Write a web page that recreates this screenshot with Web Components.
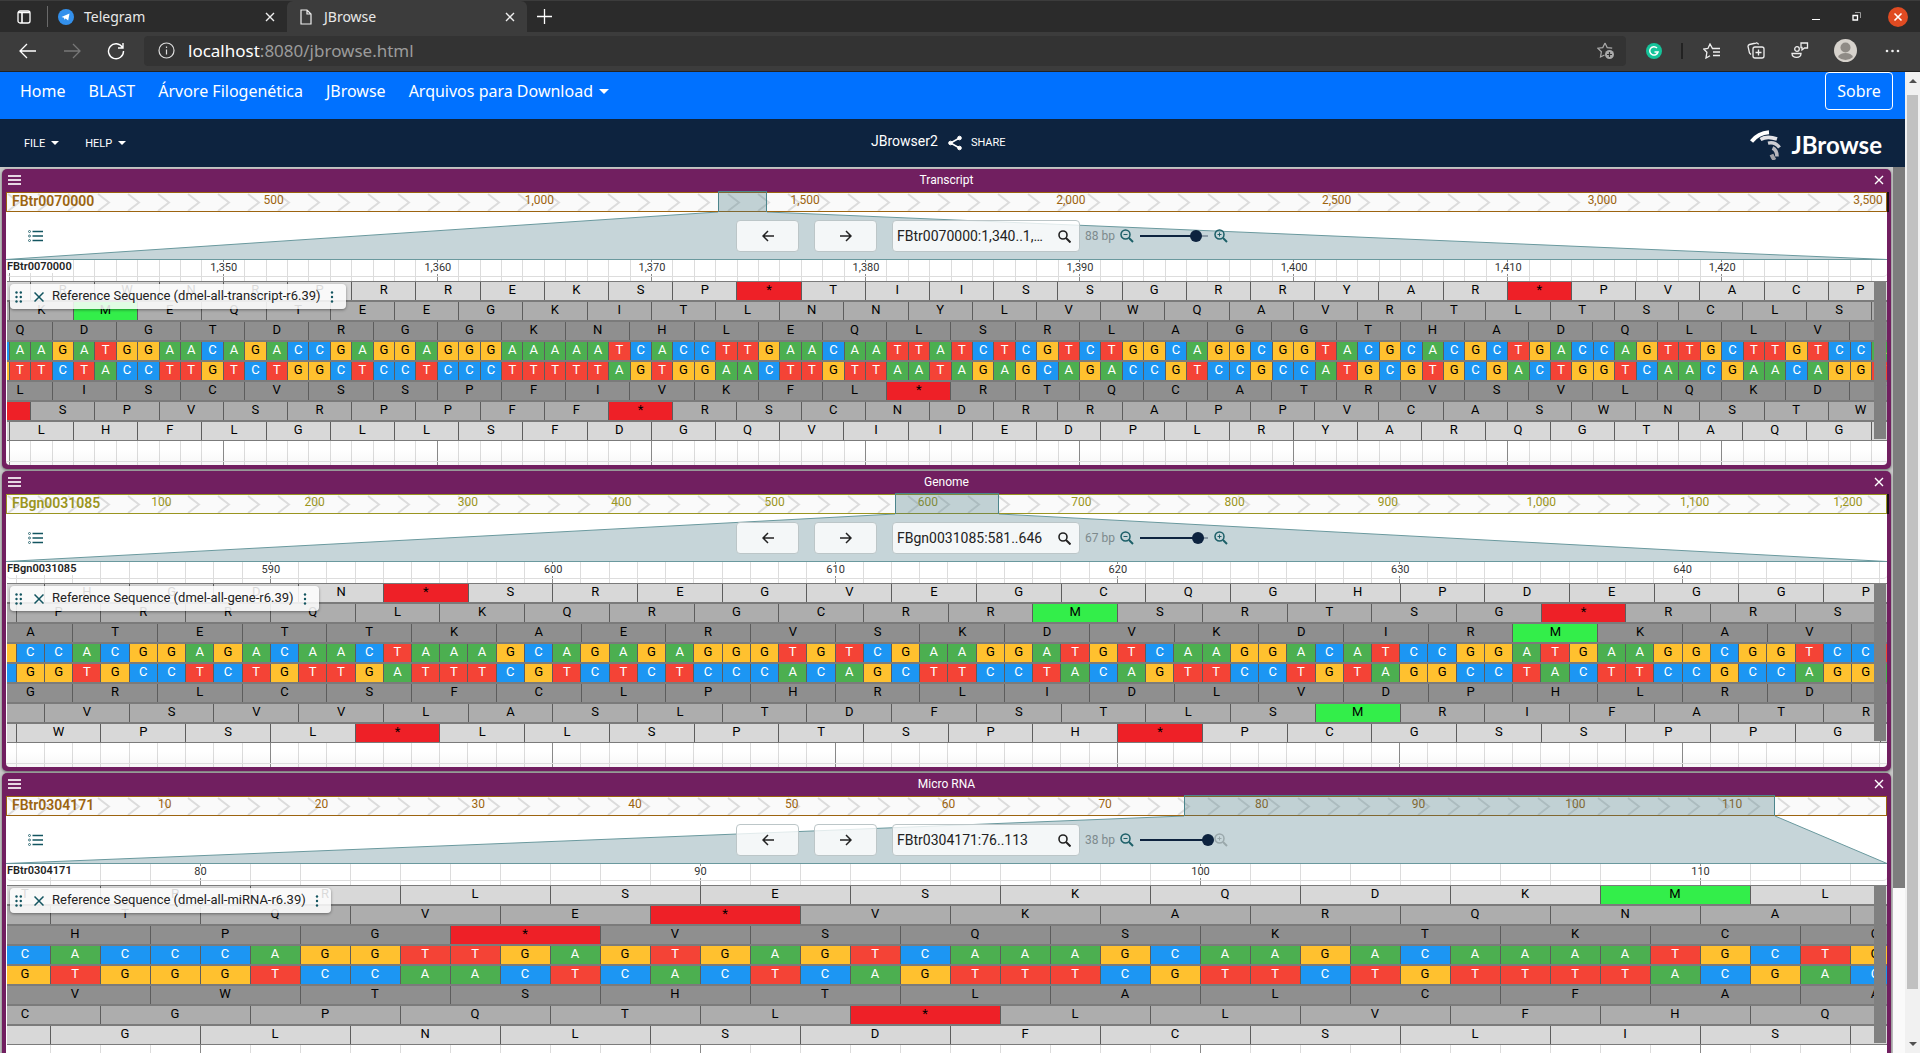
<!DOCTYPE html>
<html lang="pt">
<head>
<meta charset="utf-8">
<title>JBrowse</title>
<style>
  html, body { margin: 0; height: 100%; }
  body { overflow: hidden; font-family: Roboto, "Open Sans", sans-serif; }
</style>
</head>
<body>
<browser-window>
  <site-nav slot="page"></site-nav>
  <genome-app slot="page">
    <genome-view name="Transcript" ref="FBtr0070000" set="dmel-all-transcript-r6.39" loc="FBtr0070000:1,340..1,…" span="88 bp" zoom="83"
      tone="#9c6410" seq="GTCAAGATGGAACAGACCGAGGAGGGAAAAATCACCTTGAACAATTATCTCGTCTGGCAGGCGGTACGCACGCTGACCAGTTGCTTGTCCACA"
      seq-start="1337" from="1339.920" bases="87.85" phases="1,0,2"
      ov-step="500" ov-count="7" ov-origin="1" ov-pitch="266" ov-a="712" ov-b="761" tail></genome-view>
    <genome-view name="Genome" ref="FBgn0031085" set="dmel-all-gene-r6.39" loc="FBgn0031085:581..646" span="67 bp" zoom="85"
      tone="#9a9520" seq="GAGCCACGGAGACAACTAAAGCAGAGAGGGTGTCGAAGGATGTCAAGGACATCCGGATGAAGGCGGTCCTGC"
      seq-start="578" from="580.690" bases="66.57" phases="1,0,2"
      ov-step="100" ov-count="12" ov-origin="1" ov-pitch="153.5" ov-a="889" ov-b="993" tail></genome-view>
    <genome-view name="Micro RNA" ref="FBtr0304171" set="dmel-all-miRNA-r6.39" loc="FBtr0304171:76..113" span="38 bp" zoom="100"
      tone="#9c6410" seq="GACACCCAGGTTGAGTGAGTCAAAGCAAGACAAAATGCTGCAA"
      seq-start="74" from="76.15" bases="37.6" phases="1,0,2"
      ov-step="10" ov-count="11" ov-origin="1" ov-pitch="156.9" ov-a="1178" ov-b="1769"></genome-view>
  </genome-app>
</browser-window>

<script>
const BASE = `*{box-sizing:border-box} button,input{font:inherit;color:inherit;margin:0;padding:0;border:0;background:none}
  a{color:inherit;text-decoration:none} svg{display:block;flex:none}`;

class Base extends HTMLElement {
  connectedCallback() {
    if (this.shadowRoot) return;
    this.attachShadow({ mode: 'open' }).innerHTML = `<style>${BASE}${this.css()}</style>${this.html()}`;
  }
  num(n) { return parseFloat(this.getAttribute(n)); }
  str(n) { return this.getAttribute(n) || ''; }
}

/* ---------- browser chrome ---------- */
customElements.define('browser-tab', class extends Base {
  css() { return `
    :host{display:flex;align-items:center;width:240px;height:32px;padding:0 12px 0 11px;gap:10px;color:#e8e8e8;font-size:14px}
    :host([active]){background:#3c3c3c;border-radius:6px 6px 0 0}
    span{flex:1;white-space:nowrap} button{width:10px;height:10px}`; }
  html() { return `<slot name="icon"></slot><span><slot></slot></span>
    <button aria-label="Close tab"><svg width="10" height="10" stroke="#eee" stroke-width="1.4"><path d="M1 1l8 8M9 1L1 9"/></svg></button>`; }
});

customElements.define('browser-window', class extends Base {
  css() { return `
    :host{display:flex;flex-direction:column;height:100vh;background:#3c3c3c;font-family:"Noto Sans",sans-serif}
    .tabs{display:flex;align-items:center;height:32px;background:#2b2b2b;border-top:1px solid #3c3c3c;flex:none}
    .side{width:47px;display:flex;justify-content:center}
    .rule{width:1px;height:21px;background:#6a6a6a;margin-right:-1px}
    .new{width:34px;display:flex;justify-content:center}
    .grow{flex:1}
    .win{width:40px;height:31px;display:flex;align-items:center;justify-content:center}
    .win.last{width:44px}
    .bar{display:flex;align-items:center;height:40px;padding:0 4px 2px 6px;border-bottom:1px solid #222;flex:none}
    .bar button{width:44px;height:30px;display:flex;align-items:center;justify-content:center;flex:none}
    .bar button.wide{width:47px}
    .addr{display:flex;align-items:center;flex:1;height:30px;background:#333;border-radius:4px;margin:0 6px;padding:0 11px 0 14px;font-size:17px;color:#9b9b9b}
    .addr p{flex:1;margin:0 0 0 13px} .addr b{font-weight:400;color:#fff}
    .sep{width:2px;height:16px;background:#222;margin:0 7px 0 5px}
    .body{flex:1;display:flex;min-height:0;overflow:hidden}
    .page{flex:1;display:flex;flex-direction:column;min-width:0;background:#fff}
    .scroll{width:15px;background:#f1f1f1;display:flex;flex-direction:column;align-items:center;padding:6px 0;flex:none}
    .thumb{width:11px;height:894px;background:#c1c1c1;margin:12px 2px auto 2px}`; }
  html() { return `
  <div class="tabs">
    <div class="side"><svg width="14" height="14" fill="none" stroke="#fff" stroke-width="1.3"><rect x="1" y="1" width="12" height="12" rx="2"/><path d="M1 2.500h12M5 3v10" stroke-width="1.6"/></svg></div>
    <div class="rule"></div>
    <browser-tab><svg slot="icon" width="16" height="16"><circle cx="8" cy="8" r="8" fill="#3390ec"/><path d="M3.500 8l8-3.500-1.300 7-2.600-1.900-1.200 1.200-.4-2.100z" fill="#fff"/></svg>Telegram</browser-tab>
    <browser-tab active><svg slot="icon" width="16" height="16" fill="none" stroke="#eee" stroke-width="1.200"><path d="M3 1h6l4 4v10H3zM9 1v4h4"/></svg>JBrowse</browser-tab>
    <button class="new" aria-label="New tab"><svg width="15" height="15" stroke="#fff" stroke-width="1.300"><path d="M7.500 0v15M0 7.500h15"/></svg></button>
    <div class="grow"></div>
    <button class="win" aria-label="Minimize"><svg width="8" height="8" stroke="#fff"><path d="M0 6.500h8"/></svg></button>
    <button class="win" aria-label="Restore"><svg width="9" height="9" fill="none" stroke="#fff"><path d="M1 3.500h4.500v4.500H1z" stroke-width="1.300"/><path d="M3 .5h5.500V6" stroke="#999"/></svg></button>
    <button class="win last" aria-label="Close"><svg width="20" height="20"><circle cx="10" cy="10" r="10" fill="#e04b22"/><path d="M6.500 6.500l7 7m0-7l-7 7" stroke="#fff" stroke-width="1.600"/></svg></button>
  </div>
  <div class="bar">
    <button aria-label="Back"><svg width="18" height="16" fill="none" stroke="#fff" stroke-width="1.300"><path d="M17 8H1.500M8 1L1 8l7 7"/></svg></button>
    <button aria-label="Forward"><svg width="18" height="16" fill="none" stroke="#777" stroke-width="1.300"><path d="M1 8h15.500M10 1l7 7-7 7"/></svg></button>
    <button aria-label="Reload"><svg width="18" height="18" fill="none" stroke="#fff" stroke-width="1.400"><path d="M15.500 5.500A7.500 7.500 0 1 0 16.500 9M16 1v5h-5"/></svg></button>
    <div class="addr"><svg width="17" height="17" fill="none" stroke="#ddd" stroke-width="1.200"><circle cx="8.500" cy="8.500" r="7.500"/><path d="M8.500 7.500v5M8.500 4.500v1.500"/></svg>
      <p><b>localhost</b>:8080/jbrowse.html</p>
      <svg width="18" height="18" fill="none" stroke="#aaa" stroke-width="1.200"><path d="M8 1l2.200 4.600 5 .6M8 1L5.800 5.600l-5 .6 3.600 3.500L3.500 15l4-2"/><circle cx="12.500" cy="12.500" r="4.500" fill="#aaa" stroke="none"/><path d="M12.500 10v5M10 12.500h5" stroke="#333"/></svg></div>
    <button aria-label="Grammarly"><svg width="16" height="16"><circle cx="8" cy="8" r="8" fill="#15c39a"/><path d="M11 5a4.200 4.200 0 1 0 1 4H8.500" fill="none" stroke="#fff" stroke-width="1.500"/></svg></button>
    <div class="sep"></div>
    <button aria-label="Favorites"><svg width="18" height="16" fill="none" stroke="#eee" stroke-width="1.300"><path d="M11 5.500H9.500L7 1 4.900 5.500l-4.200.5 3.200 3.200L3 15l4-2.300M10.500 5.500H17M10 9h7M10 12.500h7"/></svg></button>
    <button aria-label="Collections"><svg width="18" height="17" fill="none" stroke="#eee" stroke-width="1.300"><rect x="6" y="5" width="11" height="11" rx="2"/><path d="M11.500 7.500v6M8.500 10.500h6M4 12.500L2.500 11 1 4.500a2 2 0 0 1 1.500-2L9 1a2 2 0 0 1 2.500 1.500"/></svg></button>
    <button aria-label="Feedback"><svg width="18" height="17" fill="none" stroke="#eee" stroke-width="1.300"><circle cx="6" cy="7" r="2.300"/><path d="M1 11.500h9c0 5-9 5.500-9 0zM10 1h6.500v5h-3L11 8V5.500h-1z"/></svg></button>
    <button class="wide" aria-label="Profile"><svg width="23" height="23"><circle cx="11.500" cy="11.500" r="11.500" fill="#d6d2cc"/><circle cx="11.500" cy="8.500" r="5" fill="#8f8b86"/><path d="M4 18a8 6 0 0 1 15 0 11 11 0 0 1-15 0z" fill="#8f8b86"/></svg></button>
    <button class="wide" aria-label="Menu"><svg width="15" height="4" fill="#eee"><circle cx="2" cy="2" r="1.300"/><circle cx="7.500" cy="2" r="1.300"/><circle cx="13" cy="2" r="1.300"/></svg></button>
  </div>
  <div class="body">
    <div class="page"><slot name="page"></slot></div>
    <div class="scroll"><svg width="8" height="5" fill="#505050"><path d="M0 5l4-4 4 4z"/></svg><div class="thumb"></div><svg width="8" height="5" fill="#505050"><path d="M0 0l4 4 4-4z"/></svg></div>
  </div>`; }
});

/* ---------- site navigation ---------- */
customElements.define('site-nav', class extends Base {
  css() { return `
    :host{display:flex;height:47px;background:#0071ff;color:#fff;font:16px/24px "Noto Sans",sans-serif;padding-left:20px;flex:none;align-items:flex-start}
    nav{display:flex;flex:1;gap:23px;padding-top:7px}
    button.menu{display:flex;align-items:center;gap:6px}
    .menu i{border:5px solid transparent;border-top-color:#fff;border-bottom:0}
    .about{height:38px;width:68px;border:1px solid #fff;border-radius:4px;margin-right:12px}`; }
  html() { return `<nav><a href="#">Home</a><a href="#">BLAST</a><a href="#">Árvore Filogenética</a><a href="#">JBrowse</a>
    <button class="menu" aria-haspopup="menu">Arquivos para Download<i></i></button></nav><button class="about">Sobre</button>`; }
});

/* ---------- JBrowse shell ---------- */
customElements.define('genome-app', class extends Base {
  css() { return `
    :host{display:flex;flex-direction:column;flex:1;min-height:0;font-family:Roboto,sans-serif}
    header{display:flex;justify-content:space-between;align-items:center;height:48px;background:#0d233f;color:#fff;flex:none;padding:0 23px 0 24px}
    .menus{display:flex;gap:26px;font-size:11px}
    .menus button{display:flex;align-items:center;gap:6px}
    .menus i{border:4px solid transparent;border-top-color:#fff;border-bottom:0}
    .mid{display:flex;align-items:center;gap:10px;font-size:14px;line-height:16px}
    .mid span{padding-bottom:4px}
    .mid button{display:flex;align-items:center;gap:9px;font-size:11px}
    .logo{display:flex;align-items:center;gap:10px;font:700 24px/30px Lato,sans-serif;padding-top:3px}
    .work{display:flex;flex:1;min-height:0}
    main{flex:1;min-width:0;display:flex;flex-direction:column;gap:2px;padding:2px 2px 0;background:#c8c8c8;overflow:hidden}
    .bar{width:12px;background:#fafafa;flex:none}
    .bar div{height:721px;background:#7d7d7d}`; }
  html() { return `<header>
    <div class="menus"><button aria-haspopup="menu">FILE<i></i></button><button aria-haspopup="menu">HELP<i></i></button></div>
    <div class="mid"><span>JBrowser2</span><button><svg width="14" height="16" fill="#fff" stroke="#fff"><circle cx="11.500" cy="3" r="1.800"/><circle cx="11.500" cy="13" r="1.800"/><circle cx="2.500" cy="8" r="1.800"/><path d="M11.500 3l-9 5 9 5" fill="none" stroke-width="1.500"/></svg>SHARE</button></div>
    <div class="logo"><svg width="31" height="30" fill="none"><path d="M1.500 11.500Q8 3 19 2.200" stroke="#fff" stroke-width="4"/><path d="M10.500 9.500Q17 5.500 27 9" stroke="#e4e4e8" stroke-width="3.600"/><path d="M18 13.200Q25 11.500 29.500 17.500" stroke="#cfcfd4" stroke-width="3.400"/><path d="M22.500 18Q27 20 27 26.500" stroke="#b8b8be" stroke-width="3.600"/><path d="M21.500 24.500Q22.500 27 24.500 30" stroke="#a2a2a8" stroke-width="4"/></svg>JBrowse</div>
  </header>
  <div class="work"><main><slot></slot></main><div class="bar"><div></div></div></div>`; }
});

/* ---------- one linear genome view ---------- */
customElements.define('genome-view', class extends Base {
  css() { return `
    :host{display:block;background:#711f60;border-radius:5px;padding:0 4px 4px;flex:none;box-shadow:0 1px 3px rgba(0,0,0,.5)}
    header{display:flex;align-items:center;height:23px;padding:0 1px 2px;color:#fff;font-size:12px}
    h2{flex:1;margin:0;font:inherit;text-align:center}
    header button{width:15px;height:12px;display:flex;align-items:center;justify-content:center}
    .body{background:#fff;border-radius:0 0 4px 4px;overflow:hidden}`; }
  html() {
    const at = (...n) => n.map(k => this.hasAttribute(k) ? `${k}="${this.str(k)}"` : '').join(' ');
    return `<header><button aria-label="View menu"><svg width="13" height="10" stroke="#e6d6e2" stroke-width="2"><path d="M0 1h13M0 5h13M0 9h13"/></svg></button><h2>${this.str('name')}</h2>
      <button aria-label="Close view"><svg width="10" height="10" stroke="#fff" stroke-width="1.400"><path d="M1 1l8 8M9 1L1 9"/></svg></button></header>
    <overview-bar ${at('ref', 'tone', 'ov-step', 'ov-count', 'ov-origin', 'ov-pitch', 'ov-a', 'ov-b', 'tail')}></overview-bar>
    <div class="body"><view-controls ${at('loc', 'span', 'zoom', 'ov-a', 'ov-b')}></view-controls>
    <sequence-pane ${at('ref', 'set', 'seq', 'seq-start', 'from', 'bases', 'phases')}></sequence-pane></div>`;
  }
});

const WIDTH = 1881;   // design width that the overview coordinates refer to
const pct = v => (v * 100).toFixed(3) + '%';

customElements.define('overview-bar', class extends Base {
  css() { return `
    :host{display:block;position:relative;height:20px;color:${this.str('tone')};font-size:12px;line-height:14px}
    :host([tail]){box-shadow:2px 0 #1a1018}
    .in{height:20px;background:#fafafa;border:1px solid currentColor;overflow:hidden;position:relative}
    svg{position:absolute;inset:0;width:100%;height:100%}
    .scale{display:flex;position:relative}
    .scale div{flex:1}
    .scale span{display:flex;justify-content:center;width:0}
    b{position:absolute;left:5px;top:0;font-size:14px;line-height:16px;font-weight:600}
    .hl{position:absolute;top:-1px;bottom:-1px;background:rgba(62,115,125,.3);border:1px solid #4c858c}`; }
  html() {
    const n = this.num('ov-count'), p = this.num('ov-pitch'), o = this.num('ov-origin'), a = this.num('ov-a'), b = this.num('ov-b');
    let cells = '';
    for (let i = 0; i <= n; i++) cells += `<div>${i ? `<span>${(i * this.num('ov-step')).toLocaleString('en-US')}</span>` : ''}</div>`;
    return `<div class="in"><svg><defs><pattern id="c" width="30" height="20" patternUnits="userSpaceOnUse"><path d="M1 1l11 8.500L1 18" fill="none" stroke="#dcdcdc" stroke-width="2"/></pattern></defs><rect width="100%" height="100%" fill="url(#c)"/></svg>
      <div class="scale" style="width:${pct((n + 1) * p / WIDTH)};margin-left:${pct(o / WIDTH)}">${cells}</div><b>${this.str('ref')}</b></div>
      <div class="hl" style="left:${pct(a / WIDTH)};width:${pct((b - a) / WIDTH)}"></div>`;
  }
});

customElements.define('view-controls', class extends Base {
  css() { return `
    :host{display:flex;align-items:center;position:relative;height:48px;--v:${this.str('zoom')}%}
    .fan{position:absolute;inset:0;width:100%;height:48px}
    .list,.set{position:relative;display:flex;align-items:center}
    .list{width:71px;padding-left:22px;height:24px}
    .set{margin:0 auto;font-size:12px}
    .btn,.box{height:32px;border:1px solid #bcc6c8;border-radius:4px;background:rgba(255,255,255,.8);margin-right:15px;display:flex;align-items:center}
    .btn{width:63px;justify-content:center}
    .box{width:188px;margin-right:5px;padding:0 8px 0 4px}
    .box input{flex:1;min-width:0;font-size:14px;color:#222;outline:0}
    .bp{color:#7d8a8d;width:35px}
    .zoom{display:flex}
    input[type=range]{appearance:none;width:80px;height:14px;outline:0;background:linear-gradient(90deg,#0d233f var(--v),#8b9aa6 var(--v)) center/68px 2px no-repeat}
    input[type=range]::-webkit-slider-thumb{appearance:none;width:12px;height:12px;border-radius:50%;background:#0d233f}`; }
  html() {
    const a = this.num('ov-a'), b = this.num('ov-b'), full = this.num('zoom') === 100;
    const lens = (c, plus) => `<svg width="14" height="14" fill="none" stroke="${c}" stroke-width="1.500"><circle cx="5.500" cy="5.500" r="4.500"/><path d="M9 9l4 4" stroke-width="2"/><path d="M3.500 5.500h4${plus ? 'M5.500 3.500v4' : ''}" stroke-width="1"/></svg>`;
    return `<svg class="fan" viewBox="0 0 ${WIDTH} 48" preserveAspectRatio="none"><path d="M0 47.500L${a} 0H${b}L${WIDTH} 47.500z" fill="#c6d5d9"/><path d="M${a} 0L0 47.500H${WIDTH}L${b} 0" fill="none" stroke="#6a999e" vector-effect="non-scaling-stroke"/></svg>
    <button class="list" aria-label="Track selector"><svg width="15" height="12" fill="none" stroke="#135560" stroke-width="1.400"><path d="M4.500 1.500H15M4.500 6H15M4.500 10.500H15"/><g stroke-width=".8"><circle cx="1.500" cy="1.500" r="1"/><circle cx="1.500" cy="6" r="1"/><circle cx="1.500" cy="10.500" r="1"/></g></svg></button>
    <div class="set">
      <button class="btn" aria-label="Pan left"><svg width="12" height="12" fill="none" stroke="#222" stroke-width="1.500"><path d="M12 6H1M6 1L1 6l5 5"/></svg></button>
      <button class="btn" aria-label="Pan right"><svg width="12" height="12" fill="none" stroke="#222" stroke-width="1.500"><path d="M0 6h11M6 1l5 5-5 5"/></svg></button>
      <label class="box"><input type="text" aria-label="Location" value="${this.str('loc')}"><svg width="13" height="13" fill="none" stroke="#222" stroke-width="1.600"><circle cx="5" cy="5" r="4"/><path d="M8 8l4.500 4.500" stroke-width="2"/></svg></label>
      <span class="bp">${this.str('span')}</span>
      <button class="zoom" aria-label="Zoom out">${lens('#1c5f68')}</button>
      <input type="range" aria-label="Zoom" min="0" max="100" value="${this.num('zoom')}">
      <button class="zoom" aria-label="Zoom in">${lens(full ? '#9aa8ab' : '#1c5f68', true)}</button>
    </div>`;
  }
});

/* ---------- ruler, gridlines and translated sequence ---------- */
const AMINO = 'FFLLSSSSYY**CC*WLLLLPPPPHHQQRRRRIIIMTTTTNNKKSSRRVVVVAAAADDEEGGGG';
const PAIR = { A: 'T', T: 'A', C: 'G', G: 'C' };
const translate = c => AMINO[[...c].reduce((n, b) => n * 4 + 'TCAG'.indexOf(b), 0)];

customElements.define('sequence-pane', class extends Base {
  css() { return `
    :host{display:block;position:relative;height:205px;overflow:hidden;padding-left:1px}
    .row,.grid{display:flex}
    .clip{position:relative;height:205px;overflow:hidden}
    .grid{position:absolute;top:0;height:205px}
    .grid div{flex:1;border-left:1px solid #dcdcdc}
    .grid .ten{border-color:#8a8a8a}
    .grid span{display:flex;justify-content:center;width:0;padding-top:2px}
    .grid em{font:11px/12px Roboto,sans-serif;color:#333;background:#fff}
    .ruler{position:relative;height:17px;border-bottom:1px solid #ddd;border-radius:0 0 4px 4px}
    .ruler b{display:block;width:max-content;font-size:11px;line-height:13px;font-weight:600;background:#fff;color:#222}
    .rows{position:relative;padding-top:4px}
    .row{height:20px;border:solid #7b7b7b;border-width:1px 0;font-size:13px;line-height:16px;text-align:center;color:#000}
    .row div{border-left:1px solid #5d5d5d;flex:3 1 0;overflow:hidden}
    .row.dna div{flex-grow:1}
    .f0 div{background:#d8d8d8} .f1 div{background:#adadad} .f2 div{background:#8f8f8f}
    .row .stop{background:#ee2027} .row .start{background:#33ee4a}
    .A{background:#4caf50;color:#fff} .C{background:#1c96f3;color:#fff} .G{background:#ffc12f} .T{background:#f44336;color:#fff}
    .edge{position:absolute;right:1px;top:21px;width:12px;height:158px;background:#808080}
    .foot{position:absolute;left:0;right:0;bottom:0;height:24px;background:linear-gradient(transparent 8px,rgba(0,0,0,.03))}
    .foot::after{content:"";display:block;height:20px;border-bottom:1px solid #ddd}
    .label{position:absolute;left:4px;top:24px;height:25px;display:flex;align-items:center;gap:5px;padding:0 8px 0 2px;border-radius:4px;background:rgba(255,255,255,.85);box-shadow:0 1px 3px rgba(0,0,0,.4);font-size:13px;color:#222}
    .label span{padding-bottom:2px}
    .label button{width:14px;display:flex;justify-content:center}
    .label .close{width:16px}
    .label .menu{width:12px}`; }
  place(start, count) {
    const vis = this.num('bases');
    return `style="width:${pct(count / vis)};margin-left:${pct((start - this.num('from')) / vis)}"`;
  }
  html() {
    const seq = this.str('seq'), s0 = this.num('seq-start'), [p1, p2, p3] = this.str('phases').split(',').map(Number);
    const from = this.num('from'), to = from + this.num('bases') * .9975;
    // a letter is written only where its centre is inside the visible region
    const seen = centre => centre > from + .1 && centre < to;
    const comp = [...seq].map(b => PAIR[b]).join('');
    const codons = (phase, shade, reverse) => {
      let out = '', n = 0;
      for (let i = phase; i + 3 <= seq.length; i += 3, n += 3) {
        const aa = translate(reverse ? [...comp.slice(i, i + 3)].reverse().join('') : seq.slice(i, i + 3));
        out += `<div${aa === '*' ? ' class="stop"' : aa === 'M' ? ' class="start"' : ''}>${seen(s0 + i + 1.5) ? aa : ''}</div>`;
      }
      return `<div class="row f${shade}" ${this.place(s0 + phase, n)}>${out}</div>`;
    };
    const dna = s => `<div class="row dna" ${this.place(s0, s.length)}>${[...s].map((b, i) => `<div class="${b}">${seen(s0 + i + .5) ? b : ''}</div>`).join('')}</div>`;
    let grid = '';
    for (let i = 0; i < seq.length; i++) {
      const pos = s0 + i, ten = pos % 10 === 0;
      grid += `<div${ten ? ' class="ten"' : ''}>${ten && i > 3 ? `<span><em>${pos.toLocaleString('en-US')}</em></span>` : ''}</div>`;
    }
    return `<div class="clip"><div class="grid" ${this.place(s0, seq.length)}>${grid}</div>
      <div class="ruler"><b>${this.str('ref')}</b></div>
      <div class="rows">${codons(p1, 0)}${codons(p2, 1)}${codons(p3, 2)}${dna(seq)}${dna(comp)}${codons(p3, 2, true)}${codons(p1, 1, true)}${codons(p2, 0, true)}</div></div>
      <div class="edge"></div><div class="foot"></div>
      <div class="label"><button aria-label="Drag track"><svg width="8" height="12" fill="#135560"><circle cx="1.500" cy="1.500" r="1.200"/><circle cx="5.800" cy="1.500" r="1.200"/><circle cx="1.500" cy="6" r="1.200"/><circle cx="5.800" cy="6" r="1.200"/><circle cx="1.500" cy="10.500" r="1.200"/><circle cx="5.800" cy="10.500" r="1.200"/></svg></button><button class="close" aria-label="Close track"><svg width="10" height="10" stroke="#135560" stroke-width="1.500"><path d="M.5.5l9 9m0-9l-9 9"/></svg></button><span>Reference Sequence (${this.str('set')})</span><button class="menu" aria-label="Track menu"><svg width="4" height="12" fill="#135560"><circle cx="2" cy="1.500" r="1.200"/><circle cx="2" cy="6" r="1.200"/><circle cx="2" cy="10.500" r="1.200"/></svg></button></div>`;
  }
});
</script>
</body>
</html>
